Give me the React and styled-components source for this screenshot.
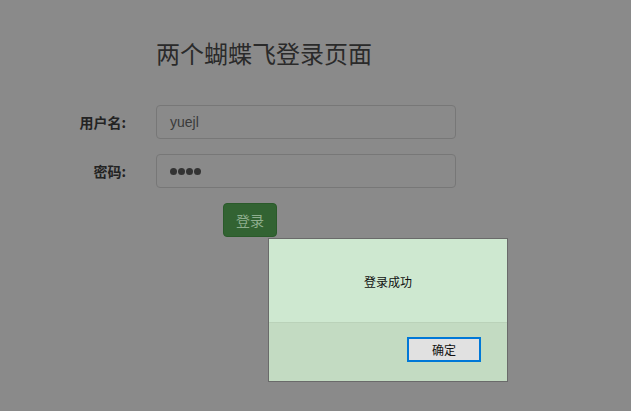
import React from "react";
import styled, { createGlobalStyle } from "styled-components";

const GlobalStyle = createGlobalStyle`
  html, body {
    margin: 0;
    padding: 0;
    background: #8a8a8a;
  }
  body {
    font-family: "Liberation Sans", "Noto Sans CJK SC", sans-serif;
    width: 631px;
    height: 411px;
    overflow: hidden;
  }
`;

const Page = styled.div`
  position: relative;
  width: 631px;
  height: 411px;
  background: #8a8a8a;
  padding-top: 36px;
  box-sizing: border-box;
`;

const Title = styled.h2`
  margin: 0 0 35px 156px;
  font-family: "Noto Sans CJK SC", sans-serif;
  font-weight: 400;
  font-size: 24px;
  line-height: 34px;
  color: #2a2a2a;
`;

const Form = styled.form`
  display: flex;
  flex-direction: column;
  gap: 15px;
`;

const Row = styled.div`
  display: flex;
  align-items: center;
  gap: 30px;
`;

const Label = styled.label`
  width: 126px;
  text-align: right;
  font-family: "Noto Sans CJK SC", sans-serif;
  font-weight: 700;
  font-size: 14px;
  color: #232323;
`;

const Input = styled.div`
  width: 300px;
  height: 34px;
  box-sizing: border-box;
  border: 1px solid #777;
  border-radius: 4px;
  padding: 0 13px;
  display: flex;
  align-items: center;
  font-family: "Liberation Sans", sans-serif;
  font-size: 14px;
  color: #3a3a3a;
`;

const Dot = styled.span`
  width: 7px;
  height: 7px;
  border-radius: 50%;
  background: #333;
  margin-right: 1px;
`;

const SubmitButton = styled.button`
  margin-left: 223px;
  width: 54px;
  height: 34px;
  border: 1px solid #2a5a2a;
  border-radius: 4px;
  background: #326332;
  color: #8eae8e;
  font-family: "Noto Sans CJK SC", sans-serif;
  font-size: 14px;
  padding: 0;
`;

const Dialog = styled.div`
  position: absolute;
  left: 268px;
  top: 238px;
  width: 240px;
  height: 144px;
  box-sizing: border-box;
  border: 1px solid #6a6a6a;
  display: flex;
  flex-direction: column;
  font-family: "Noto Sans CJK SC", sans-serif;
`;

const DialogBody = styled.div`
  height: 84px;
  background: #cee8d0;
  border-bottom: 1px solid #bad2b9;
  display: flex;
  align-items: center;
  justify-content: center;
  font-size: 12px;
  color: #111;
  padding-top: 2px;
  box-sizing: border-box;
`;

const DialogFooter = styled.div`
  flex: 1;
  background: #c3dbc2;
  display: flex;
  justify-content: flex-end;
  align-items: flex-start;
  padding: 14px 26px 0 0;
`;

const OkButton = styled.button`
  width: 74px;
  height: 25px;
  box-sizing: border-box;
  border: 2px solid #0078d7;
  background: #e1e1e1;
  font-family: "Noto Sans CJK SC", sans-serif;
  font-size: 12px;
  color: #111;
  padding: 0;
`;

const App = () => (
  <>
    <GlobalStyle />
    <Page>
      <Title>两个蝴蝶飞登录页面</Title>
      <Form>
        <Row>
          <Label>用户名:</Label>
          <Input>yuejl</Input>
        </Row>
        <Row>
          <Label>密码:</Label>
          <Input>
            <Dot />
            <Dot />
            <Dot />
            <Dot />
          </Input>
        </Row>
        <SubmitButton type="button">登录</SubmitButton>
      </Form>
      <Dialog>
        <DialogBody>登录成功</DialogBody>
        <DialogFooter>
          <OkButton type="button">确定</OkButton>
        </DialogFooter>
      </Dialog>
    </Page>
  </>
);

export default App;
